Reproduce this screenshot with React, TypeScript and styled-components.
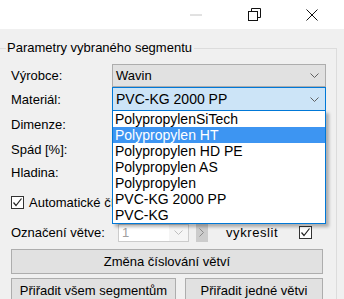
import React from 'react';
import styled, { createGlobalStyle } from 'styled-components';

const GlobalStyle = createGlobalStyle`
  html, body {
    margin: 0;
    padding: 0;
    background: #f0f0f0;
  }
  body {
    font-family: 'Liberation Sans', Arial, sans-serif;
    font-size: 13px;
    color: #000;
  }
`;

const Window = styled.div`
  width: 344px;
  height: 299px;
  overflow: hidden;
  background: #f0f0f0;
`;

const TitleBar = styled.div`
  height: 29px;
  background: #fff;
  display: flex;
  justify-content: flex-end;
  padding-right: 3px;
`;

const CaptionButton = styled.div`
  width: 58px;
  height: 29px;
  display: flex;
  align-items: center;
  justify-content: center;
`;

const Body = styled.div`
  padding-top: 11px;
  padding-right: 7px;
`;

const Group = styled.fieldset`
  margin: 0;
  border: 1px solid #dcdcdc;
  border-left: none;
  padding: 8px 0 0 11px;
  min-width: 0;
`;

const Legend = styled.legend`
  margin-left: -5px;
  padding: 0 2px 0 1px;
  line-height: 16px;
  font-size: 13px;
`;

const Row = styled.div<{ h: number }>`
  display: flex;
  align-items: center;
  height: ${(p) => p.h}px;
  position: relative;
`;

const Label = styled.div`
  width: 101px;
  flex-shrink: 0;
  white-space: nowrap;
`;

const Combo = styled.div<{ active?: boolean }>`
  position: relative;
  box-sizing: border-box;
  width: 214px;
  height: 100%;
  display: flex;
  align-items: center;
  justify-content: space-between;
  padding: 0 6px 0 3px;
  border: 1px solid ${(p) => (p.active ? '#0078d7' : '#adadad')};
  background: ${(p) => (p.active ? '#cce4f7' : '#e1e1e1')};
  font-size: ${(p) => (p.active ? 14 : 13)}px;
`;

const List = styled.div`
  position: absolute;
  top: 100%;
  left: -1px;
  width: 214px;
  box-sizing: border-box;
  background: #fff;
  border: 1px solid #0078d7;
  box-shadow: 3px 3px 3px rgba(0, 0, 0, 0.28);
  z-index: 5;
`;

const Item = styled.div<{ selected?: boolean }>`
  height: 16px;
  line-height: 16px;
  padding-left: 2px;
  font-size: 14px;
  white-space: nowrap;
  background: ${(p) => (p.selected ? '#3d95f2' : 'transparent')};
  color: ${(p) => (p.selected ? '#fff' : '#000')};
`;

const CheckRow = styled.label`
  display: flex;
  align-items: center;
  gap: 5px;
  width: 101px;
  overflow: hidden;
  white-space: nowrap;
`;

const Box = styled.span`
  width: 13px;
  height: 13px;
  box-sizing: border-box;
  border: 1px solid #333;
  background: #fff;
  display: inline-flex;
  align-items: center;
  justify-content: center;
  flex-shrink: 0;
`;

const SmallCombo = styled.div`
  margin-left: 13px;
  width: 71px;
  height: 18px;
  box-sizing: border-box;
  border: 1px solid #cccccc;
  display: flex;
  align-items: stretch;
`;

const SmallEdit = styled.div`
  width: 47px;
  background: #fff;
  color: #a0a0a0;
  padding-left: 3px;
  line-height: 16px;
`;

const SmallDrop = styled.div`
  flex: 1;
  background: #f5f5f5;
  display: flex;
  align-items: center;
  justify-content: center;
`;

const StepButton = styled.div`
  margin-left: 7px;
  width: 12px;
  height: 18px;
  background: #cccccc;
  display: flex;
  align-items: center;
  justify-content: center;
`;

const Caption = styled.span`
  margin-left: 18px;
  width: 73px;
  letter-spacing: 0.6px;
`;

const Button = styled.div<{ w: number }>`
  width: ${(p) => p.w}px;
  height: 25px;
  box-sizing: border-box;
  border: 1px solid #adadad;
  background: #e1e1e1;
  display: flex;
  align-items: center;
  justify-content: center;
  white-space: nowrap;
`;

const WideButton = styled(Button)`
  margin-top: 4px;
`;

const ButtonRow = styled.div`
  display: flex;
  gap: 9px;
  margin-top: 4px;
`;

const Chevron = ({ color = '#606060' }: { color?: string }) => (
  <svg width="9" height="5" viewBox="0 0 9 5">
    <polyline points="0.5,0.5 4.5,4.5 8.5,0.5" fill="none" stroke={color} strokeWidth="1" />
  </svg>
);

const Check = () => (
  <svg width="11" height="11" viewBox="0 0 11 11">
    <polyline points="1.5,5.5 4,8.5 9.5,1.5" fill="none" stroke="#222" strokeWidth="1.2" />
  </svg>
);

const items = [
  'PolypropylenSiTech',
  'Polypropylen HT',
  'Polypropylen HD PE',
  'Polypropylen AS',
  'Polypropylen',
  'PVC-KG 2000 PP',
  'PVC-KG',
];

export default function App() {
  return (
    <Window>
      <GlobalStyle />
      <TitleBar>
        <CaptionButton>
          <svg width="12" height="2" viewBox="0 0 12 2">
            <line x1="0" y1="1" x2="12" y2="1" stroke="#c4c4c4" strokeWidth="1" />
          </svg>
        </CaptionButton>
        <CaptionButton>
          <svg width="13" height="13" viewBox="0 0 13 13">
            <rect x="0.5" y="3.5" width="9" height="9" fill="none" stroke="#111" />
            <polyline points="3.5,3.5 3.5,0.5 12.5,0.5 12.5,9.5 9.5,9.5" fill="none" stroke="#111" />
          </svg>
        </CaptionButton>
        <CaptionButton>
          <svg width="12" height="12" viewBox="0 0 12 12">
            <line x1="0.5" y1="0.5" x2="11.5" y2="11.5" stroke="#111" />
            <line x1="11.5" y1="0.5" x2="0.5" y2="11.5" stroke="#111" />
          </svg>
        </CaptionButton>
      </TitleBar>
      <Body>
        <Group>
          <Legend>Parametry vybraného segmentu</Legend>
          <Row h={23}>
            <Label>Výrobce:</Label>
            <Combo>
              <span>Wavin</span>
              <Chevron />
            </Combo>
          </Row>
          <Row h={24}>
            <Label>Materiál:</Label>
            <Combo active>
              <span>PVC-KG 2000 PP</span>
              <Chevron />
              <List>
                {items.map((t, i) => (
                  <Item key={t} selected={i === 1}>
                    {t}
                  </Item>
                ))}
              </List>
            </Combo>
          </Row>
          <Row h={26}>
            <Label>Dimenze:</Label>
          </Row>
          <Row h={24}>
            <Label>Spád [%]:</Label>
          </Row>
          <Row h={23}>
            <Label>Hladina:</Label>
          </Row>
          <Row h={36}>
            <CheckRow>
              <Box>
                <Check />
              </Box>
              Automatické číslování větví
            </CheckRow>
          </Row>
          <Row h={25}>
            <span>Označení větve:</span>
            <SmallCombo>
              <SmallEdit>1</SmallEdit>
              <SmallDrop>
                <Chevron color="#bfbfbf" />
              </SmallDrop>
            </SmallCombo>
            <StepButton>
              <svg width="5" height="9" viewBox="0 0 5 9">
                <polyline points="0.5,0.5 4.5,4.5 0.5,8.5" fill="none" stroke="#8a8a8a" />
              </svg>
            </StepButton>
            <Caption>vykreslit</Caption>
            <Box>
              <Check />
            </Box>
          </Row>
          <WideButton w={312}>Změna číslování větví</WideButton>
          <ButtonRow>
            <Button w={165}>Přiřadit všem segmentům</Button>
            <Button w={138}>Přiřadit jedné větvi</Button>
          </ButtonRow>
        </Group>
      </Body>
    </Window>
  );
}
